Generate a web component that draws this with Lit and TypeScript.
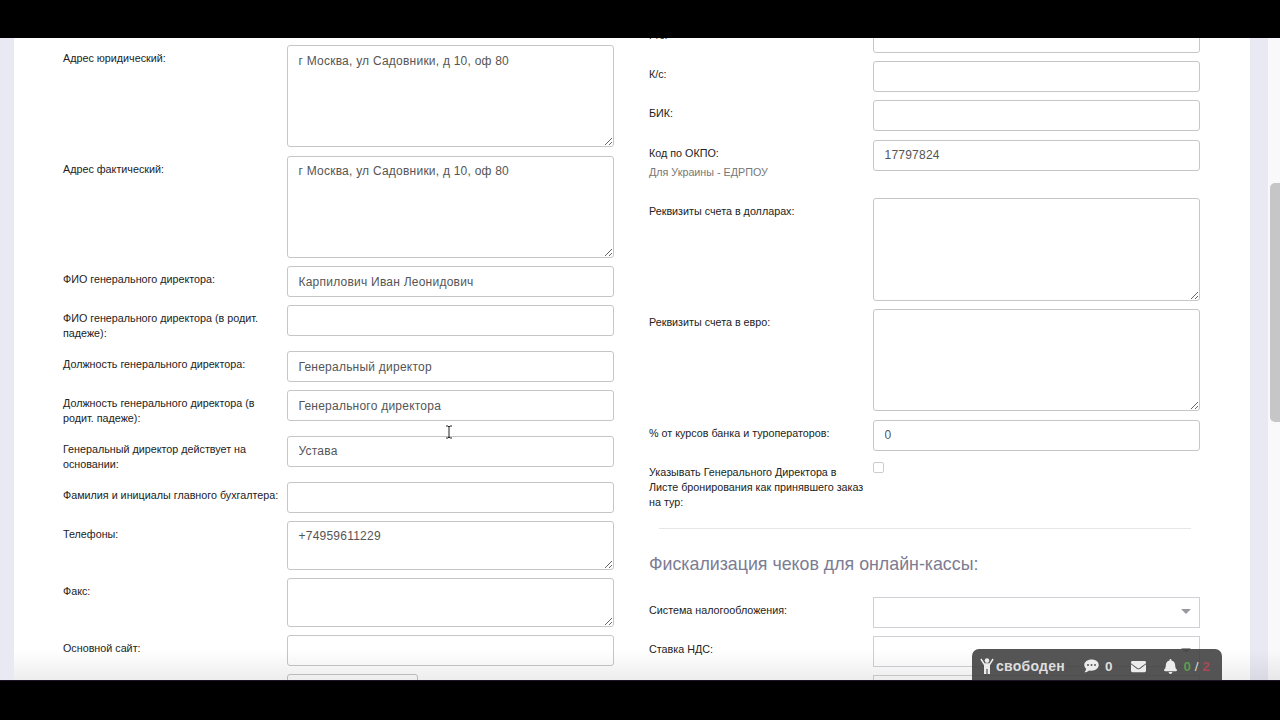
import { LitElement, css, html, nothing } from 'lit';
import { customElement } from 'lit/decorators.js';

type Field = {
    label: string;
    kind?: 'input' | 'area' | 'small' | 'select' | 'short' | 'check';
    value?: string;
    hint?: string;
    two?: boolean;
};

const ADDRESS = 'г Москва, ул Садовники, д 10, оф 80';

const leftFields: Field[] = [
    {label: 'Адрес юридический:', kind: 'area', value: ADDRESS},
    {label: 'Адрес фактический:', kind: 'area', value: ADDRESS},
    {label: 'ФИО генерального директора:', value: 'Карпилович Иван Леонидович'},
    {label: 'ФИО генерального директора (в родит. падеже):', two: true},
    {label: 'Должность генерального директора:', value: 'Генеральный директор'},
    {label: 'Должность генерального директора (в родит. падеже):', value: 'Генерального директора', two: true},
    {label: 'Генеральный директор действует на основании:', value: 'Устава', two: true},
    {label: 'Фамилия и инициалы главного бухгалтера:'},
    {label: 'Телефоны:', kind: 'small', value: '+74959611229'},
    {label: 'Факс:', kind: 'small'},
    {label: 'Основной сайт:'},
    {label: '', kind: 'short'},
];

const rightTop: Field[] = [
    {label: 'Р/с:'},
    {label: 'К/с:'},
    {label: 'БИК:'},
    {label: 'Код по ОКПО:', value: '17797824', hint: 'Для Украины - ЕДРПОУ'},
    {label: 'Реквизиты счета в долларах:', kind: 'area'},
    {label: 'Реквизиты счета в евро:', kind: 'area'},
    {label: '% от курсов банка и туроператоров:', value: '0'},
    {label: 'Указывать Генерального Директора в Листе бронирования как принявшего заказ на тур:', kind: 'check'},
];

const rightBottom: Field[] = [
    {label: 'Система налогообложения:', kind: 'select'},
    {label: 'Ставка НДС:', kind: 'select'},
    {label: '', kind: 'select'},
];

@customElement('app-root')
export class AppRoot extends LitElement {
    static styles = css`
        :host {
            display: flex;
            flex-direction: column;
            height: 720px;
            background: #000;
            font-family: "Liberation Sans", Arial, sans-serif;
            overflow: hidden;
        }

        .bar-top {
            height: 38px;
            flex: none;
        }

        .bar-bottom {
            height: 40px;
            flex: none;
            border-top: 1px solid #1c1226;
            box-sizing: border-box;
        }

        .viewport {
            flex: 1;
            min-height: 0;
            display: flex;
            position: relative;
            overflow: hidden;
        }

        .page {
            flex: 1;
            min-width: 0;
            background: #e8e9f3;
            padding: 0 18px 0 14px;
            overflow: hidden;
        }

        .panel {
            background: #fff;
            height: 100%;
            padding: 7px 0 0 49px;
            display: flex;
            gap: 35px;
            box-sizing: border-box;
            overflow: hidden;
        }

        .col {
            width: 551px;
            flex: none;
        }

        .col.right {
            margin-top: -23px;
        }

        .row {
            display: grid;
            grid-template-columns: 224px 327px;
            grid-template-rows: auto;
            align-items: start;
            padding-bottom: 8.2px;
        }

        .label {
            font-size: 10.75px;
            line-height: 15px;
            color: #222;
            padding: 6px 4px 0 0;
        }

        .row.two .label {
            padding-bottom: 1.47px;
        }

        .hint {
            display: block;
            color: #777;
            margin: 4px 0 10.6px;
        }

        input,
        textarea,
        select {
            display: block;
            box-sizing: border-box;
            width: 100%;
            margin: 0;
            padding: 0 10.5px;
            border: 1px solid #c6c6c6;
            border-radius: 3px;
            background: #fff;
            color: #555;
            font: 12px/18px "Liberation Sans", Arial, sans-serif;
            letter-spacing: 0.23px;
            outline: none;
        }

        input {
            height: 31px;
        }

        textarea {
            height: 102.4px;
            padding-top: 5.5px;
            resize: vertical;
        }

        textarea.small {
            height: 49.1px;
        }

        input.short {
            width: 131px;
        }

        .select {
            position: relative;
        }

        select {
            height: 31px;
            border-radius: 0;
            border-color: #d0d0d6;
            appearance: none;
        }

        .select::after {
            content: '';
            position: absolute;
            right: 9px;
            top: 12px;
            border-top: 5px solid #9a9a9e;
            border-left: 5.5px solid transparent;
            border-right: 5.5px solid transparent;
        }

        .check {
            width: 11px;
            height: 11px;
            margin-top: 3px;
            border: 1px solid #ccc;
            border-radius: 2px;
            box-sizing: border-box;
        }

        .row.checkbox {
            padding-bottom: 18px;
        }

        .row.checkbox .label {
            padding-right: 8px;
        }

        hr {
            margin: 0 9px 0 10px;
            border: 0;
            border-top: 1px solid #e6e6e6;
        }

        h3 {
            margin: 25px 0 23px;
            font-size: 17.8px;
            line-height: 20px;
            font-weight: 400;
            color: #7c7c92;
        }

        .scrollbar {
            width: 12px;
            flex: none;
            background: #f9f9fb;
        }

        .thumb {
            width: 10px;
            height: 239px;
            margin: 145px 0 0 2px;
            border-radius: 5px 0 0 5px;
            background: #c6c6c9;
        }

        .fade {
            position: absolute;
            left: 14px;
            right: 0;
            bottom: 0;
            height: 30px;
            background: linear-gradient(rgba(0, 0, 0, 0), rgba(0, 0, 0, 0.07));
            pointer-events: none;
        }

        .widget {
            position: absolute;
            right: 58px;
            bottom: 0;
            width: 250px;
            height: 31px;
            padding: 3px 0 0 8px;
            box-sizing: border-box;
            display: flex;
            align-items: center;
            background: rgba(66, 66, 66, 0.9);
            border-radius: 7px 7px 0 0;
            color: #dedede;
            font-size: 14px;
            font-weight: 700;
        }

        .widget svg {
            display: block;
            fill: #ebebeb;
            flex: none;
        }

        .status {
            margin-left: 2px;
            letter-spacing: 0.25px;
        }

        .chat {
            margin-left: 19px;
        }

        .count {
            margin-left: 6px;
            font-size: 13.5px;
        }

        .mail {
            margin-left: 19px;
        }

        .bell {
            margin-left: 18px;
        }

        .counts {
            margin-left: 6px;
            font-size: 13.5px;
        }

        .slash {
            font-weight: 400;
        }

        .ok {
            color: #5c9a50;
        }

        .bad {
            color: #a84a55;
        }

        .cursor {
            position: absolute;
            left: 445px;
            top: 387px;
            pointer-events: none;
        }
    `;

    renderControl(f: Field) {
        switch (f.kind) {
            case 'area':
                return html`<textarea .value=${f.value ?? ''}></textarea>`;
            case 'small':
                return html`<textarea class="small" .value=${f.value ?? ''}></textarea>`;
            case 'short':
                return html`<input class="short" />`;
            case 'select':
                return html`<div class="select"><select></select></div>`;
            case 'check':
                return html`<div class="check"></div>`;
            default:
                return html`<input .value=${f.value ?? ''} />`;
        }
    }

    renderRow(f: Field) {
        const cls = `row ${f.two ? 'two' : ''} ${f.kind === 'check' ? 'checkbox' : ''}`;
        return html`
            <div class=${cls}>
                <div class="label">
                    ${f.label}
                    ${f.hint ? html`<span class="hint">${f.hint}</span>` : nothing}
                </div>
                ${this.renderControl(f)}
            </div>
        `;
    }

    render() {
        return html`
            <div class="bar-top"></div>
            <div class="viewport">
                <div class="page">
                    <div class="panel">
                        <div class="col">${leftFields.map((f) => this.renderRow(f))}</div>
                        <div class="col right">
                            ${rightTop.map((f) => this.renderRow(f))}
                            <hr />
                            <h3>Фискализация чеков для онлайн-кассы:</h3>
                            ${rightBottom.map((f) => this.renderRow(f))}
                        </div>
                    </div>
                </div>
                <div class="scrollbar"><div class="thumb"></div></div>
                <div class="fade"></div>

                <svg class="cursor" width="8" height="14" viewBox="0 0 8 14" fill="none" stroke="#222" stroke-width="1">
                    <path d="M1 1h2l1 1 1-1h2M4 2v10M1 13h2l1-1 1 1h2" />
                </svg>

                <div class="widget">
                    <svg width="14" height="16" viewBox="0 0 14 16">
                        <circle cx="7" cy="2.600" r="2.300" />
                        <path d="M1.600.6l3 4.600h4.800l3-4.600 1.300.9L10 7.200V16H7.600v-5H6.400v5H4V7.200L.3 1.500z" />
                    </svg>
                    <span class="status">свободен</span>
                    <svg class="chat" width="15" height="14" viewBox="0 0 15 14">
                        <path d="M7.500.5C3.400.5.300 2.900.300 6c0 1.500.700 2.800 1.900 3.800-.2 1.300-1 2.600-1.700 3.400 1.900 0 3.500-.8 4.600-1.800.8.200 1.600.3 2.400.3 4.100 0 7.200-2.400 7.200-5.700S11.600.500 7.500.5z" />
                        <g fill="#555"><circle cx="4" cy="6" r="1" /><circle cx="7.500" cy="6" r="1" /><circle cx="11" cy="6" r="1" /></g>
                    </svg>
                    <span class="count">0</span>
                    <svg class="mail" width="15" height="15" viewBox="0 0 512 512">
                        <path d="M502.3 190.8c3.900-3.100 9.700-.2 9.700 4.700V400c0 26.500-21.500 48-48 48H48c-26.500 0-48-21.500-48-48V195.600c0-5 5.700-7.800 9.700-4.700 22.400 17.400 52.100 39.500 154.100 113.600 21.100 15.400 56.700 47.800 92.200 47.600 35.700.3 72-32.800 92.300-47.600 102-74.100 131.600-96.300 154-113.700zM256 320c23.200.4 56.600-29.200 73.400-41.400 132.700-96.300 142.800-104.700 173.400-128.700 5.800-4.500 9.200-11.500 9.200-18.900v-19c0-26.500-21.500-48-48-48H48C21.500 64 0 85.500 0 112v19c0 7.400 3.400 14.300 9.200 18.900 30.600 23.900 40.700 32.400 173.400 128.700 16.800 12.200 50.200 41.800 73.400 41.400z" />
                    </svg>
                    <svg class="bell" width="13" height="15" viewBox="0 0 448 512">
                        <path d="M224 512c35.320 0 63.970-28.650 63.970-64H160.030c0 35.350 28.650 64 63.970 64zm215.390-149.710c-19.320-20.760-55.470-51.990-55.470-154.290 0-77.700-54.480-139.900-127.940-155.160V32c0-17.670-14.320-32-31.980-32s-31.980 14.330-31.980 32v20.840C118.560 68.100 64.080 130.300 64.080 208c0 102.300-36.150 133.530-55.470 154.290-6 6.450-8.660 14.160-8.610 21.710.11 16.400 12.980 32 32.100 32h383.800c19.120 0 32-15.600 32.100-32 .05-7.550-2.610-15.270-8.610-21.710z" />
                    </svg>
                    <span class="counts"><span class="ok">0</span> <span class="slash">/</span> <span class="bad">2</span></span>
                </div>
            </div>
            <div class="bar-bottom"></div>
        `;
    }
}
